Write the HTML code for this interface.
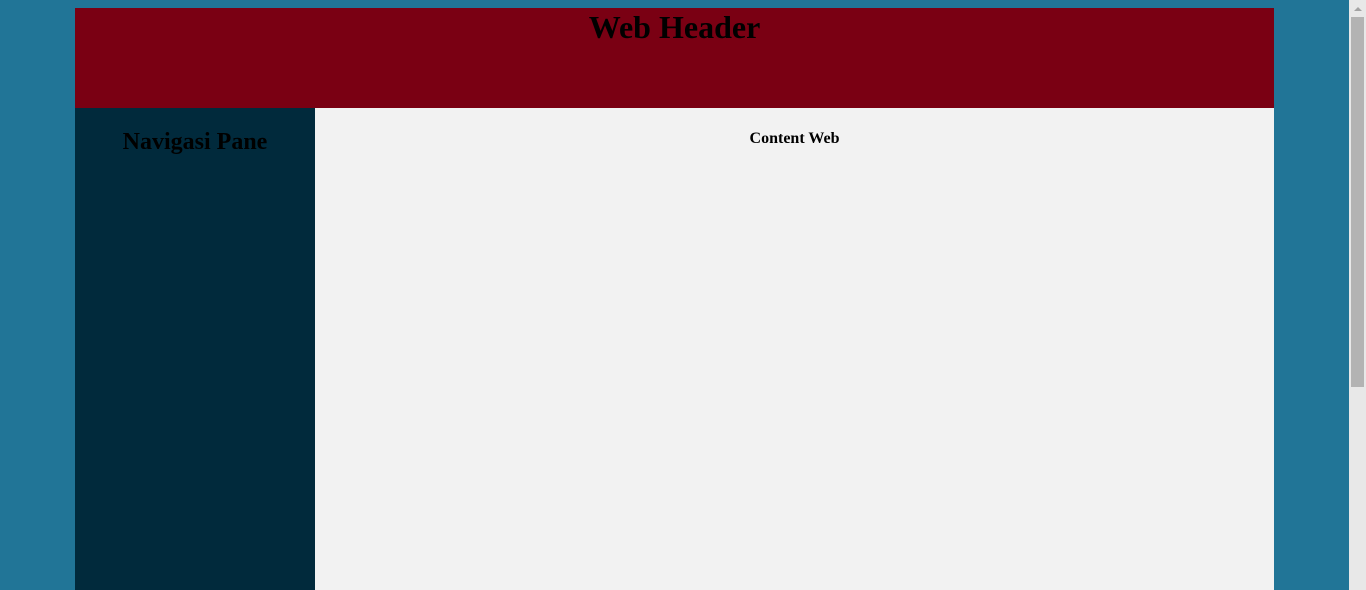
<!DOCTYPE html>
<html><head><meta charset="utf-8"><style>
html,body{margin:0;padding:0;overflow:hidden}
body{width:1366px;height:590px;background:#217597;font-family:"Liberation Serif",serif;position:relative}
#wrap{position:absolute;left:75px;top:8px;width:1199px;height:582px;overflow:hidden}
#hd{height:100px;background:#7a0013;text-align:center}
#hd h1{margin:0;padding-top:0;font-size:32px;line-height:37px;position:relative;top:1px}
#nav{position:absolute;left:0;top:100px;width:240px;height:482px;background:#012a3c;text-align:center}
#nav h2{font-size:24px;margin:21px 0 0}
#ct{position:absolute;left:240px;top:100px;width:959px;height:482px;background:#f2f2f2;text-align:center}
#ct h4{font-size:16px;margin:22px 0 0}
#sb{position:absolute;left:1349px;top:0;width:17px;height:590px;background:#e8e8e8}
#th{position:absolute;left:2px;top:17px;width:13px;height:370px;background:#b3b3b3}
#ar{position:absolute;left:5px;top:7px;width:0;height:0;border-left:4px solid transparent;border-right:4px solid transparent;border-bottom:4px solid #a3a3a3}
</style></head><body>
<div id="wrap">
<div id="hd"><h1>Web Header</h1></div>
<div id="nav"><h2>Navigasi Pane</h2></div>
<div id="ct"><h4>Content Web</h4></div>
</div>
<div id="sb"><div id="ar"></div><div id="th"></div></div>
</body></html>
